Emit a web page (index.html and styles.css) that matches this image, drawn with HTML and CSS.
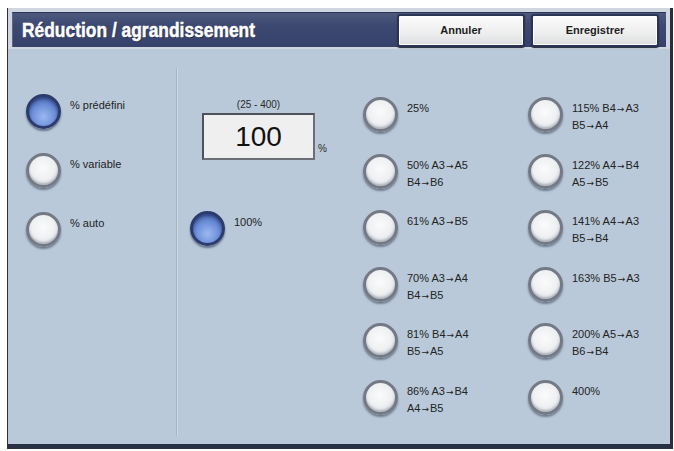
FILE: index.html
```html
<!DOCTYPE html>
<html lang="fr">
<head>
<meta charset="utf-8">
<title>Réduction / agrandissement</title>
<link rel="stylesheet" href="styles.css">
</head>
<body>
<div class="screen">
  <div class="top">
    <div class="header">
      <div class="title-wrap"><h1 class="title">Réduction / agrandissement</h1></div>
      <button class="btn">Annuler</button>
      <button class="btn">Enregistrer</button>
    </div>
  </div>
  <div class="content">
    <div class="col-left">
      <div class="opt"><span class="radio on"></span><span class="lbl">% prédéfini</span></div>
      <div class="opt"><span class="radio"></span><span class="lbl">% variable</span></div>
      <div class="opt"><span class="radio"></span><span class="lbl">% auto</span></div>
    </div>
    <div class="sep"></div>
    <div class="col-mid">
      <div class="entry">
        <div class="range">(25 - 400)</div>
        <div class="valrow">
          <div class="valbox">100</div>
          <span class="pct">%</span>
        </div>
      </div>
      <div class="opt"><span class="radio on"></span><span class="lbl">100%</span></div>
    </div>
    <div class="grid">
      <div class="opt"><span class="radio"></span><span class="lbl">25%</span></div>
      <div class="opt"><span class="radio"></span><span class="lbl">50% A3<span class="ar">→</span>A5<br>B4<span class="ar">→</span>B6</span></div>
      <div class="opt"><span class="radio"></span><span class="lbl">61% A3<span class="ar">→</span>B5</span></div>
      <div class="opt"><span class="radio"></span><span class="lbl">70% A3<span class="ar">→</span>A4<br>B4<span class="ar">→</span>B5</span></div>
      <div class="opt"><span class="radio"></span><span class="lbl">81% B4<span class="ar">→</span>A4<br>B5<span class="ar">→</span>A5</span></div>
      <div class="opt"><span class="radio"></span><span class="lbl">86% A3<span class="ar">→</span>B4<br>A4<span class="ar">→</span>B5</span></div>
      <div class="opt"><span class="radio"></span><span class="lbl">115% B4<span class="ar">→</span>A3<br>B5<span class="ar">→</span>A4</span></div>
      <div class="opt"><span class="radio"></span><span class="lbl">122% A4<span class="ar">→</span>B4<br>A5<span class="ar">→</span>B5</span></div>
      <div class="opt"><span class="radio"></span><span class="lbl">141% A4<span class="ar">→</span>A3<br>B5<span class="ar">→</span>B4</span></div>
      <div class="opt"><span class="radio"></span><span class="lbl">163% B5<span class="ar">→</span>A3</span></div>
      <div class="opt"><span class="radio"></span><span class="lbl">200% A5<span class="ar">→</span>A3<br>B6<span class="ar">→</span>B4</span></div>
      <div class="opt"><span class="radio"></span><span class="lbl">400%</span></div>
    </div>
  </div>
</div>
</body>
</html>
```

FILE: styles.css
```css
html, body {
  margin: 0;
  padding: 0;
  background: #ffffff;
}

body {
  font-family: "Liberation Sans", Arial, sans-serif;
}

.screen {
  margin: 8px 0 0 7px;
  width: 662px;
  height: 436px;
  border-left: 1px solid #2c3038;
  border-right: 3px solid #2a2f3b;
  border-bottom: 5px solid #283044;
  background: #b9c9d9;
  display: flex;
  flex-direction: column;
}

.top {
  background: #cfd6df;
  padding: 4px 4px 2px 4px;
}

.header {
  height: 35px;
  box-sizing: border-box;
  background: linear-gradient(#4d597c, #3d4971 35%, #36426b);
  border-top: 1px solid #2c3556;
  border-left: 1px solid #5a6688;
  display: flex;
  align-items: center;
  padding: 0 7px 0 9px;
  gap: 6px;
}

.title-wrap {
  flex: 1;
}

.title {
  display: inline-block;
  margin: 0;
  color: #ffffff;
  font-family: "Liberation Sans", Arial, sans-serif;
  font-weight: bold;
  font-size: 20px;
  transform: scaleX(0.87);
  transform-origin: left center;
  -webkit-text-stroke: 0.5px #ffffff;
  text-shadow: 1px 1px 0 #1f2740;
}

.btn {
  width: 128px;
  height: 33px;
  box-sizing: border-box;
  border: 2px solid #2a3453;
  border-radius: 3px;
  background: linear-gradient(#fbfbfb, #eeeeee 60%, #dadcdf);
  box-shadow: inset 0 0 0 1px #ffffff, 0 1px 1px #1c2238;
  font-family: "Liberation Sans", Arial, sans-serif;
  font-weight: bold;
  font-size: 11px;
  color: #1e1e1e;
  padding: 0;
}

.content {
  flex: 1;
  display: flex;
}

.col-left {
  width: 168px;
  box-sizing: border-box;
  padding: 45px 0 0 18px;
  display: flex;
  flex-direction: column;
  gap: 24px;
}

.sep {
  width: 1px;
  margin: 19px 0 8px 0;
  background: #a6b5c6;
  border-right: 1px solid #cdd8e4;
}

.col-mid {
  width: 175px;
  box-sizing: border-box;
  padding: 50px 0 0 12px;
}

.entry {
  margin-left: 12px;
}

.range {
  width: 113px;
  text-align: center;
  font-size: 10px;
  line-height: 12px;
  color: #2a2a2a;
  margin-bottom: 2px;
}

.valrow {
  display: flex;
  align-items: flex-end;
}

.valbox {
  width: 113px;
  height: 47px;
  box-sizing: border-box;
  border: 2px solid #4e5258;
  border-right-color: #6c7076;
  border-bottom-color: #6c7076;
  background: #efefef;
  text-align: center;
  font-size: 28px;
  line-height: 43px;
  color: #111111;
}

.pct {
  font-size: 10px;
  color: #2a2a2a;
  margin: 0 0 6px 3px;
}

.col-mid .opt {
  margin-top: 51px;
}

.grid {
  padding: 48px 0 0 10px;
  display: grid;
  grid-template-columns: 165px 140px;
  grid-template-rows: repeat(6, 56.6px);
  grid-auto-flow: column;
}

.opt {
  display: flex;
  align-items: flex-start;
  gap: 9px;
}

.radio {
  flex: none;
  width: 35px;
  height: 35px;
  box-sizing: border-box;
  border-radius: 50%;
  border: 3px solid #737985;
  background: radial-gradient(circle at 48% 42%, #fbfbfc 0%, #eef0f2 50%, #d4d8de 85%, #aeb4be 100%);
  box-shadow: 0 2px 2px rgba(40, 50, 70, 0.5), inset 0 -2px 2px rgba(90, 100, 115, 0.35);
}

.radio.on {
  border-color: #2b3c6c;
  background: radial-gradient(circle at 50% 68%, #9ab8f0 0%, #6f91da 45%, #4a67b4 80%, #34498a 100%);
  box-shadow: 0 2px 2px rgba(20, 30, 60, 0.5), inset 0 2px 3px rgba(20, 30, 70, 0.5);
}

.lbl {
  margin-top: 3px;
  font-size: 11px;
  line-height: 16px;
  color: #232323;
  white-space: nowrap;
}

.ar {
  font-family: "DejaVu Sans", sans-serif;
  font-size: 9px;
  margin: 0 1px;
}
```
